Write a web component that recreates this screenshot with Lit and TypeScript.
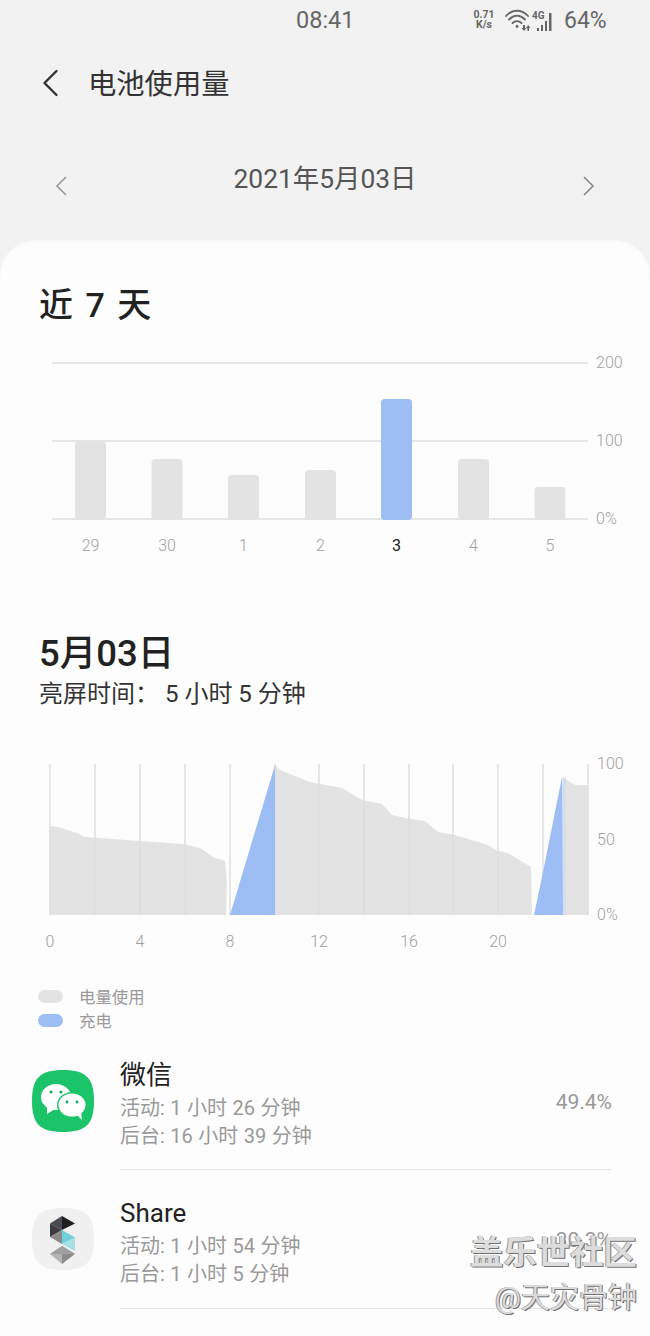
import { LitElement, html, css, svg } from "lit";
import { customElement } from "lit/decorators.js";

const SQUIRCLE = "M31 0C54 0 62 8 62 31C62 54 54 62 31 62C8 62 0 54 0 31C0 8 8 0 31 0Z";
const WEEK = [
  { d: "29", x: 90.5, top: 441 },
  { d: "30", x: 167, top: 459 },
  { d: "1", x: 243.5, top: 475 },
  { d: "2", x: 320.5, top: 470 },
  { d: "3", x: 396.5, top: 399, on: true },
  { d: "4", x: 473.5, top: 459 },
  { d: "5", x: 550, top: 487 },
];
const GRID2 = [50, 95, 140, 185, 230, 275, 319, 364, 409, 453, 498, 543, 588];
const HOURS: [string, number][] = [["0", 50], ["4", 140], ["8", 230], ["12", 319], ["16", 409], ["20", 498]];

@customElement("app-root")
export class AppRoot extends LitElement {
  static styles = css`
    :host {
      display: block;
      width: 650px;
      height: 1336px;
      overflow: hidden;
      position: relative;
      background: #f2f2f2;
      font-family: Roboto, "Noto Sans CJK SC", sans-serif;
      color: #222;
    }
    svg { display: block; }
    .status {
      height: 40px;
      position: relative;
      display: flex;
      align-items: center;
      color: #666;
      font-size: 23px;
    }
    .time { margin-left: 296px; width: 176px; font-size: 23.5px; }
    .speed {
      width: 24px;
      font-size: 10.5px;
      line-height: 10.5px;
      font-weight: 700;
      text-align: center;
    }
    .net { margin: 0 7px 0 8px; }
    .header {
      height: 86px;
      display: flex;
      align-items: center;
    }
    .back { margin: 0 28px 0 41px; }
    .title { font-size: 28.3px; line-height: 40px; color: #333; margin-top: 4px; }
    .date {
      margin-top: 26px;
      height: 52px;
      display: flex;
      align-items: center;
      justify-content: space-between;
      padding: 0 54px;
    }
    .date span { font-size: 26.4px; color: #555; margin-bottom: 4px; }
    .date svg { margin-top: 16px; }
    .card {
      margin-top: 36px;
      height: 1096px;
      background: #fdfdfd;
      border-radius: 36px 36px 0 0;
      padding-top: 44px;
      box-sizing: border-box;
      box-shadow: inset 0 1px 2px #f7f7f7;
    }
    .h1 {
      margin-left: 39px;
      font-size: 34px;
      line-height: 42px;
      font-weight: 500;
      word-spacing: 4px;
      color: #222;
    }
    .chart1 { margin-top: 24px; }
    .h2 {
      margin: 67px 0 0 39px;
      font-size: 36.5px;
      line-height: 44px;
      font-weight: 500;
      color: #222;
    }
    .shot {
      margin: 1px 0 0 39px;
      font-size: 24px;
      line-height: 34px;
      color: #333;
      white-space: pre;
    }
    .chart2 { margin-top: 39px; }
    .legend { margin: 24px 0 0 38px; }
    .key {
      height: 24px;
      display: flex;
      align-items: center;
      gap: 16px;
      font-size: 16.4px;
      color: #999;
    }
    .pill { width: 25px; height: 13px; border-radius: 7px; background: #e3e3e3; }
    .pill.blue { background: #9dbdf5; }
    .row { display: flex; padding-left: 32px; }
    .row svg { margin: 38px 26px 0 0; flex: none; }
    .main {
      width: 492px;
      height: 138px;
      box-sizing: border-box;
      padding-top: 28px;
      border-bottom: 1px solid #e6e6e6;
      display: flex;
      justify-content: space-between;
      align-items: flex-start;
    }
    .row + .row .main { height: 139px; }
    .name { font-size: 26px; line-height: 30px; margin-bottom: 4px; color: #222; }
    .sub { font-size: 20px; line-height: 28px; color: #999; word-spacing: 0.5px; }
    .pct { font-size: 21px; line-height: 28px; color: #999; margin-top: 28px; }
    .mark {
      position: absolute;
      right: 13px;
      bottom: 16px;
      text-align: right;
      color: #dcdcdc;
      text-shadow: 1px 1px 0 #707070, -1px 0 0 #9a9a9a;
    }
    .mark .a { font-size: 33.4px; line-height: 40px; font-weight: 700; }
    .mark .b { font-size: 29px; line-height: 44px; margin-top: 3px; }
    text { font-family: Roboto, sans-serif; font-size: 16px; font-weight: 300; fill: #a0a0a0; }
    text.on { fill: #222; font-weight: 400; }
    text.tiny { font-size: 10px; font-weight: 700; fill: #666; }
  `;

  private week() {
    return html`<svg class="chart1" width="650" height="215" viewBox="0 350 650 215">
      ${[363, 441, 519].map((y) => svg`<line x1="52" x2="588" y1=${y} y2=${y} stroke="#e6e6e6" stroke-width="2"/>`)}
      ${WEEK.map((b) => svg`
        <rect x=${b.x - 15.5} y=${b.top} width="31" height=${520 - b.top} rx="4" fill=${b.on ? "#9dbdf5" : "#e3e3e3"}/>
        <text x=${b.x} y="551" text-anchor="middle" class=${b.on ? "on" : ""}>${b.d}</text>`)}
      <text x="596" y="368">200</text>
      <text x="596" y="446">100</text>
      <text x="596" y="524">0%</text>
    </svg>`;
  }

  private day() {
    return html`<svg class="chart2" width="650" height="210" viewBox="0 750 650 210">
      <path fill="#e3e3e3" d="M50 826L58 827L77 833L85 837L140 841L183 844L200 848L213 857L225 861L227 883L226 915H50Z"/>
      <path fill="#e3e3e3" d="M275 765L280 770L310 782L342 788L362 800L382 804L392 815L405 818L425 821L438 832L455 835L485 844L498 851L508 853L531 867L532 915H275Z"/>
      <path fill="#e3e3e3" d="M562 777L575 785L588 785V915H562Z"/>
      ${GRID2.map((x) => svg`<line x1=${x} x2=${x} y1="764" y2="915" stroke="#dedee0" stroke-width="1.5"/>`)}
      <rect x="563" y="778" width="3" height="137" fill="#d5def0"/>
      <path fill="#9dbdf5" d="M230 915L275 765V915Z"/>
      <path fill="#9dbdf5" d="M534 915L542 877L562 777L563 915Z"/>
      ${HOURS.map(([l, x]) => svg`<text x=${x} y="947" text-anchor="middle">${l}</text>`)}
      <text x="597" y="769">100</text>
      <text x="597" y="845">50</text>
      <text x="597" y="920">0%</text>
    </svg>`;
  }

  private wechat() {
    return html`<svg width="62" height="62" viewBox="0 0 62 62">
      <path d="${SQUIRCLE}" fill="#1cc469"/>
      <ellipse cx="24" cy="27" rx="15" ry="13" fill="#fff"/>
      <path d="M15 36L15 44L23 39Z" fill="#fff"/>
      <ellipse cx="40" cy="35" rx="15" ry="13" fill="#1cc469"/>
      <ellipse cx="40" cy="35" rx="13.5" ry="11.5" fill="#fff"/>
      <path d="M44 44L50 50L49 42Z" fill="#fff"/>
      <circle cx="19" cy="22" r="1.6" fill="#17a85a"/>
      <circle cx="29" cy="22" r="1.6" fill="#17a85a"/>
      <circle cx="35" cy="32" r="1.4" fill="#17a85a"/>
      <circle cx="45" cy="32" r="1.4" fill="#17a85a"/>
    </svg>`;
  }

  private share() {
    return html`<svg width="62" height="62" viewBox="0 0 62 62">
      <path d="${SQUIRCLE}" fill="#f0f0f0"/>
      <path d="M30 8L18 15.500L30 22Z" fill="#4a4a50"/>
      <path d="M30 8L43 15.500L30 22Z" fill="#1f1f23"/>
      <path d="M18 15.500L30 22L18 29Z" fill="#3c3c40"/>
      <path d="M18 29L30 22V36Z" fill="#8a8a8a"/>
      <path d="M30 22L43 29.500L30 36Z" fill="#6fd0d8"/>
      <path d="M43 29.500V43L30 36Z" fill="#a5e0e4"/>
      <path d="M18 46L30 38V56Z" fill="#b5b5b5"/>
      <path d="M30 38L43 46L30 56Z" fill="#8c8c8c"/>
      <path d="M18 46L30 38L43 46L30 46Z" fill="#9f9f9f"/>
    </svg>`;
  }

  render() {
    return html`
      <div class="status">
        <span class="time">08:41</span>
        <div class="speed">0.71<br />K/s</div>
        <svg class="net" width="53" height="24" viewBox="0 0 53 24">
          <g fill="none" stroke="#666" stroke-width="1.8" stroke-linecap="round">
            <path d="M2 8C8 1 18 1 24 8"/>
            <path d="M5 11.500C10 6.500 16 6.500 21 11.500"/>
            <path d="M8.500 15C11 12.500 15 12.500 17.500 15"/>
          </g>
          <circle cx="13" cy="18.500" r="1.400" fill="#666"/>
          <path d="M19 17h2v3h1.500l-2.500 3-2.500-3H19ZM25 23h-1.600v-3H22l2.200-3 2.200 3h-1.400Z" fill="#666"/>
          <g fill="#666">
            <rect x="33" y="20" width="2" height="3"/>
            <rect x="37" y="17" width="2" height="6"/>
            <rect x="41" y="13" width="2" height="10"/>
            <rect x="45" y="5" width="2.500" height="18"/>
          </g>
          <text x="28" y="11" class="tiny">4G</text>
        </svg>
        <span>64%</span>
      </div>
      <div class="header">
        <svg class="back" width="19" height="28" viewBox="0 0 19 28">
          <path d="M15.500 2L3.500 14L15.500 26" fill="none" stroke="#333" stroke-width="2.400" stroke-linecap="round" stroke-linejoin="round"/>
        </svg>
        <span class="title">电池使用量</span>
      </div>
      <div class="date">
        <svg width="15" height="22" viewBox="0 0 15 22"><path d="M12 2L3 11L12 20" fill="none" stroke="#999" stroke-width="1.600"/></svg>
        <span>2021年5月03日</span>
        <svg width="15" height="22" viewBox="0 0 15 22"><path d="M3 2L12 11L3 20" fill="none" stroke="#888" stroke-width="1.600"/></svg>
      </div>
      <div class="card">
        <div class="h1">近 7 天</div>
        ${this.week()}
        <div class="h2">5月03日</div>
        <div class="shot">亮屏时间： 5 小时 5 分钟</div>
        ${this.day()}
        <div class="legend">
          <div class="key"><span class="pill"></span>电量使用</div>
          <div class="key"><span class="pill blue"></span>充电</div>
        </div>
        <div class="row">
          ${this.wechat()}
          <div class="main">
            <div>
              <div class="name">微信</div>
              <div class="sub">活动: 1 小时 26 分钟</div>
              <div class="sub">后台: 16 小时 39 分钟</div>
            </div>
            <div class="pct">49.4%</div>
          </div>
        </div>
        <div class="row">
          ${this.share()}
          <div class="main">
            <div>
              <div class="name">Share</div>
              <div class="sub">活动: 1 小时 54 分钟</div>
              <div class="sub">后台: 1 小时 5 分钟</div>
            </div>
            <div class="pct">30.3%</div>
          </div>
        </div>
      </div>
      <div class="mark">
        <div class="a">盖乐世社区</div>
        <div class="b">@天灾骨钟</div>
      </div>
    `;
  }
}
